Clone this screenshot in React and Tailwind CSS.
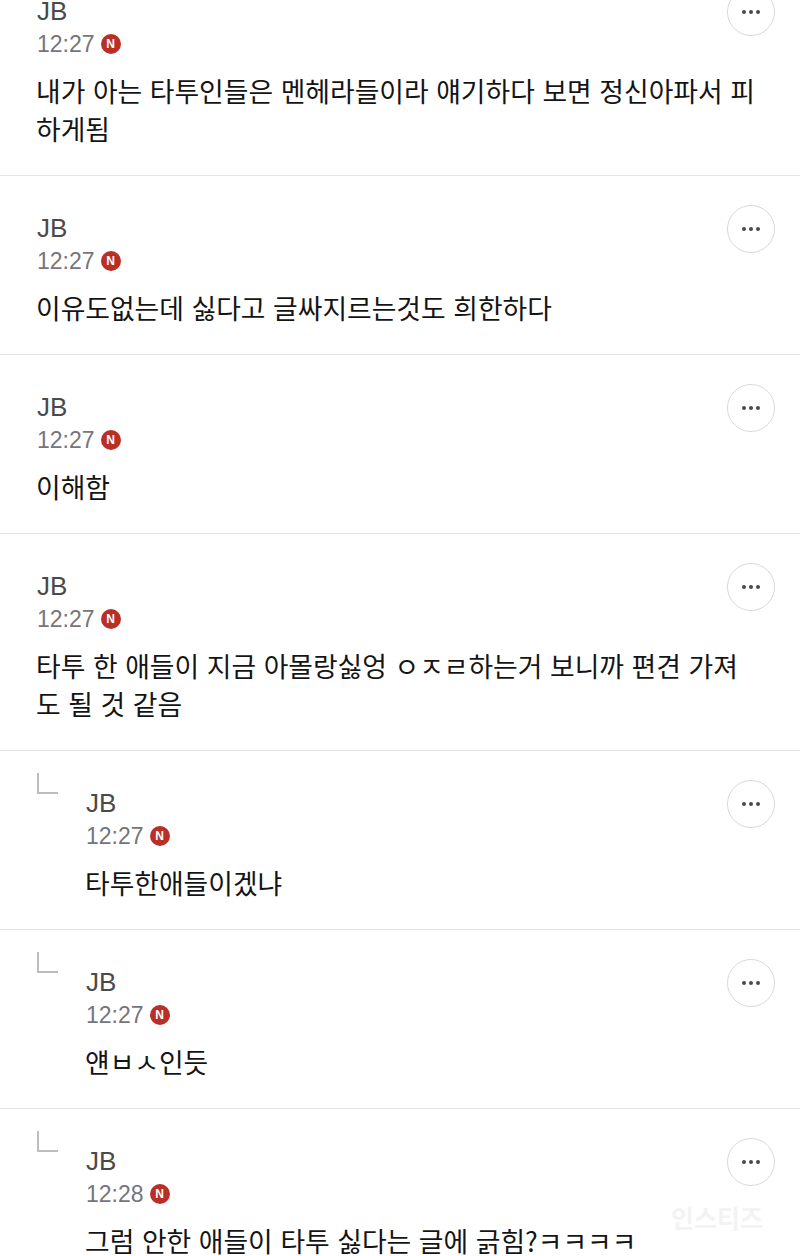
import React from "react";

const rows = [
  { time: "12:27", lines: ["내가 아는 타투인들은 멘헤라들이라 얘기하다 보면 정신아파서 피", "하게됨"] },
  { time: "12:27", lines: ["이유도없는데 싫다고 글싸지르는것도 희한하다"] },
  { time: "12:27", lines: ["이해함"] },
  { time: "12:27", lines: ["타투 한 애들이 지금 아몰랑싫엉 ㅇㅈㄹ하는거 보니까 편견 가져", "도 될 것 같음"] },
  { time: "12:27", reply: true, lines: ["타투한애들이겠냐"] },
  { time: "12:27", reply: true, lines: ["얜ㅂㅅ인듯"] },
  { time: "12:28", reply: true, lines: ["그럼 안한 애들이 타투 싫다는 글에 긁힘?ㅋㅋㅋㅋ"] },
];

function Comment({ time, lines, reply }) {
  return (
    <div className="flex border-b border-[#e4e4e4] pl-[37px] pr-[25px] pt-[36px] pb-[27px]">
      {reply && (
        <div className="w-[49px] shrink-0">
          <div className="-mt-[14px] h-[21px] w-[21px] border-b-2 border-l-2 border-[#bdbdbd]" />
        </div>
      )}
      <div className="min-w-0 flex-1">
        <div className="flex justify-between">
          <div className="font-['Liberation_Sans']">
            <div className="h-[33px] text-[26px] leading-[33px] text-[#4a4a4a]">JB</div>
            <div className="flex h-[33px] items-center gap-[6px] text-[23px] leading-[33px] text-[#75757b]">
              <span>{time}</span>
              <span className="mb-[2px] flex h-[20px] w-[20px] items-center justify-center rounded-full bg-[#b92f27] text-[12px] leading-none font-bold text-white">
                N
              </span>
            </div>
          </div>
          <button className="-mt-[7px] flex h-[48px] w-[48px] shrink-0 items-center justify-center gap-[3px] rounded-full border border-[#d9d9d9] bg-white">
            <span className="h-[4px] w-[4px] rounded-full bg-[#4a4a4a]" />
            <span className="h-[4px] w-[4px] rounded-full bg-[#4a4a4a]" />
            <span className="h-[4px] w-[4px] rounded-full bg-[#4a4a4a]" />
          </button>
        </div>
        <div className="mt-[11px] -ml-[1px] text-[26.8px] leading-[38px] [word-spacing:1.6px] whitespace-nowrap text-[#141414]">
          {lines.map((line) => (
            <div key={line}>{line}</div>
          ))}
        </div>
      </div>
    </div>
  );
}

export default function App() {
  return (
    <div
      className="relative h-[1256px] w-[800px] overflow-hidden bg-white"
      style={{ fontFamily: '"Noto Sans CJK KR", "Noto Sans", sans-serif' }}
    >
      <div className="-mt-[41px]">
        {rows.map((row, i) => (
          <Comment key={i} {...row} />
        ))}
      </div>
      {/* watermark */}
      <div className="absolute top-[1199px] left-[671px] text-[25px] font-bold text-[#f3f3f3]">인스티즈</div>
    </div>
  );
}
